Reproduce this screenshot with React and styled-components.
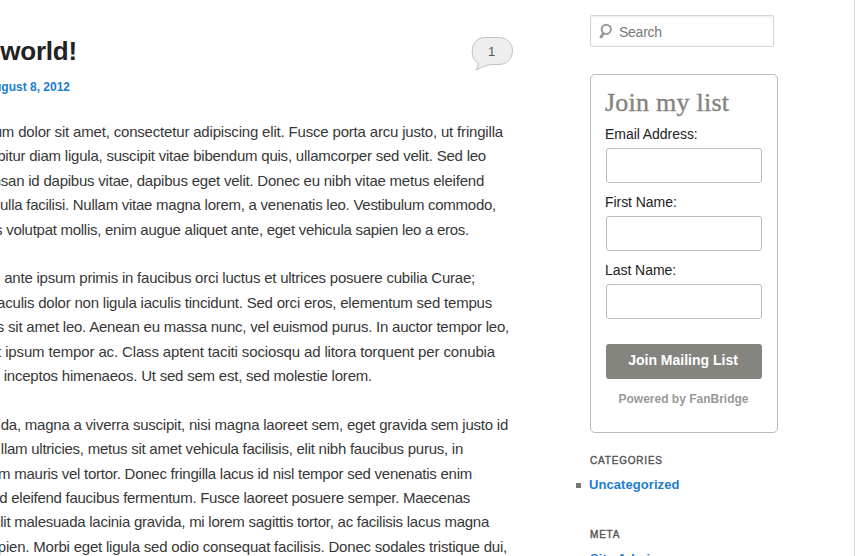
import React from 'react';
import styled, { createGlobalStyle } from 'styled-components';

const GlobalStyle = createGlobalStyle`
  * { box-sizing: border-box; }
  body {
    margin: 0;
    overflow: hidden;
    background: #fff;
    color: #373737;
    font-family: "Liberation Sans", Arial, sans-serif;
  }
  h1, h2, h3, p, ul { margin: 0; padding: 0; font-weight: normal; }
`;

const Page = styled.div`
  display: grid;
  grid-template-columns: 520px 188px;
  column-gap: 70px;
  width: 855px;
  height: 556px;
  overflow: hidden;
  border-right: 1px solid #ddd;
`;

const Article = styled.article`
  overflow: hidden;
  padding-top: 33px;
`;

const EntryHeader = styled.header`
  display: flex;
  justify-content: space-between;
  align-items: flex-start;
  height: 44px;
  padding-right: 6px;
`;

const EntryTitle = styled.h1`
  display: flex;
  justify-content: flex-end;
  width: 77px;
  font-size: 26px;
  font-weight: bold;
  line-height: 36px;
  letter-spacing: -0.2px;
  white-space: nowrap;
  color: #222;
`;

const CommentLink = styled.a`
  display: grid;
  width: 43px;
  height: 36px;
  margin-top: 3px;
  > * { grid-area: 1 / 1; }
`;

const CommentCount = styled.span`
  padding-right: 2px;
  font-size: 13px;
  line-height: 32px;
  text-align: center;
  color: #555;
`;

const EntryDate = styled.a`
  display: flex;
  justify-content: flex-end;
  width: 70px;
  height: 43.1px;
  font-size: 12px;
  font-weight: bold;
  line-height: 20px;
  white-space: nowrap;
  color: #1b7dd0;
`;

const Paragraph = styled.p`
  margin-bottom: 24.4px;
`;

const Line = styled.span`
  display: flex;
  justify-content: flex-end;
  width: ${({ $width }) => $width}px;
  height: 24.4px;
  font-size: 15px;
  line-height: 24.4px;
  letter-spacing: ${({ $tracking }) => $tracking}px;
  white-space: nowrap;
`;

const Sidebar = styled.aside`
  padding-top: 15px;
`;

const SearchForm = styled.form`
  display: flex;
  align-items: center;
  width: 184px;
  height: 32px;
  margin-bottom: 27px;
  padding-left: 8px;
  gap: 6px;
  border: 1px solid #d6d6d6;
  border-radius: 2px;
  box-shadow: inset 0 1px 2px rgba(0, 0, 0, 0.08);
`;

const SearchInput = styled.input`
  width: 140px;
  padding: 2px 0 0;
  border: 0;
  outline: 0;
  background: transparent;
  font: 14px "Liberation Sans", Arial, sans-serif;
  letter-spacing: -0.25px;
  &::placeholder { color: #777; opacity: 1; }
`;

const Signup = styled.form`
  display: flex;
  flex-direction: column;
  height: 359px;
  padding: 13px 15px 0 14px;
  border: 1px solid #bbb;
  border-radius: 5px;
`;

const SignupTitle = styled.h2`
  height: 34px;
  font: 26px/30px "Liberation Serif", Georgia, serif;
  letter-spacing: 0.24px;
  white-space: nowrap;
  color: #858580;
  -webkit-text-stroke: 0.4px #858580;
`;

const Field = styled.label`
  display: flex;
  flex-direction: column;
  gap: 2px;
  height: 68px;
  font-size: 14px;
  line-height: 24px;
  letter-spacing: -0.05px;
  color: #222;
`;

const FieldInput = styled.input`
  width: 156px;
  height: 35px;
  margin-left: 1px;
  border: 1px solid #bbb;
  border-radius: 3px;
  outline: 0;
`;

const SubmitButton = styled.button`
  width: 156px;
  height: 35px;
  margin: 18px 0 0 1px;
  padding: 0 2px 3px 0;
  border: 0;
  border-radius: 3px;
  background: #858580;
  font: bold 14px "Liberation Sans", Arial, sans-serif;
  color: #fff;
`;

const PoweredBy = styled.p`
  margin-top: 10px;
  font-size: 12px;
  font-weight: bold;
  line-height: 20px;
  text-align: center;
  white-space: nowrap;
  color: #999;
`;

const WidgetTitle = styled.h3`
  font-size: 10px;
  line-height: 26px;
  font-weight: 500;
  letter-spacing: 0.8px;
  color: #555;
  -webkit-text-stroke: 0.4px #555;
`;

const Widget = styled.section`
  height: 74px;
  &:first-of-type { margin-top: 15px; }
`;

const LinkList = styled.ul`
  list-style: none;
`;

const LinkItem = styled.li`
  display: flex;
  align-items: center;
  gap: 8px;
  height: 22px;
  margin-left: ${({ $bulleted }) => ($bulleted ? '-14px' : '0')};
  &::before {
    content: "";
    display: ${({ $bulleted }) => ($bulleted ? 'block' : 'none')};
    width: 5px;
    height: 5px;
    margin-top: 1px;
    background: #777;
  }
`;

const SidebarLink = styled.a`
  font-size: 13px;
  font-weight: bold;
  letter-spacing: 0.07px;
  line-height: 22px;
  color: #1b7dd0;
`;

const paragraphs = [
  [
    ['um dolor sit amet, consectetur adipiscing elit. Fusce porta arcu justo, ut fringilla', 503, -0.18],
    ['bitur diam ligula, suscipit vitae bibendum quis, ullamcorper sed velit. Sed leo', 486, -0.219],
    ['nsan id dapibus vitae, dapibus eget velit. Donec eu nibh vitae metus eleifend', 484, -0.225],
    ['ulla facilisi. Nullam vitae magna lorem, a venenatis leo. Vestibulum commodo,', 496, -0.261],
    ['s volutpat mollis, enim augue aliquet ante, eget vehicula sapien leo a eros.', 469, -0.271],
  ],
  [
    ['ante ipsum primis in faucibus orci luctus et ultrices posuere cubilia Curae;', 475, -0.223],
    ['aculis dolor non ligula iaculis tincidunt. Sed orci eros, elementum sed tempus', 492, -0.208],
    ['s sit amet leo. Aenean eu massa nunc, vel euismod purus. In auctor tempor leo,', 509, -0.222],
    ['t ipsum tempor ac. Class aptent taciti sociosqu ad litora torquent per conubia', 495, -0.137],
    ['inceptos himenaeos. Ut sed sem est, sed molestie lorem.', 372, -0.216],
  ],
  [
    ['da, magna a viverra suscipit, nisi magna laoreet sem, eget gravida sem justo id', 508, -0.228],
    ['llam ultricies, metus sit amet vehicula facilisis, elit nibh faucibus purus, in', 463, -0.249],
    ['m mauris vel tortor. Donec fringilla lacus id nisl tempor sed venenatis enim', 472, -0.247],
    ['d eleifend faucibus fermentum. Fusce laoreet posuere semper. Maecenas', 470, -0.272],
    ['lit malesuada lacinia gravida, mi lorem sagittis tortor, ac facilisis lacus magna', 489, -0.255],
    ['pien. Morbi eget ligula sed odio consequat facilisis. Donec sodales tristique dui,', 507, -0.206],
  ],
];

const fields = ['Email Address:', 'First Name:', 'Last Name:'];

function CommentBubble() {
  return (
    <svg width="43" height="36" viewBox="0 0 43 36" fill="none">
      <path
        d="M15 1.5H27C36 1.5 41.5 7 41.5 14.5C41.5 23 36 28.5 27 28.5H22C16 28.5 11 31 5 34C6.3 31.5 7.5 29.5 7.2 27.2C3.2 25 1.2 20.5 1.2 15.5C1.2 7 6.5 1.5 15 1.5Z"
        fill="#eee"
        stroke="#c2c2c2"
      />
    </svg>
  );
}

function SearchIcon() {
  return (
    <svg width="14" height="17" viewBox="0 0 14 17" fill="none" stroke="#999">
      <circle cx="7.3" cy="6.3" r="4.6" strokeWidth="2" />
      <path d="M4.5 10L1.5 15" strokeWidth="3" />
    </svg>
  );
}

export default function App() {
  return (
    <>
      <GlobalStyle />
      <Page>
        <Article>
          <EntryHeader>
            <EntryTitle>world!</EntryTitle>
            <CommentLink>
              <CommentBubble />
              <CommentCount>1</CommentCount>
            </CommentLink>
          </EntryHeader>
          <EntryDate>ugust 8, 2012</EntryDate>
          {paragraphs.map((lines, index) => (
            <Paragraph key={index}>
              {lines.map(([text, width, tracking]) => (
                <Line key={text} $width={width} $tracking={tracking}>{text}</Line>
              ))}
            </Paragraph>
          ))}
        </Article>
        <Sidebar>
          <SearchForm>
            <SearchIcon />
            <SearchInput placeholder="Search" />
          </SearchForm>
          <Signup>
            <SignupTitle>Join my list</SignupTitle>
            {fields.map((label) => (
              <Field key={label}>
                {label}
                <FieldInput />
              </Field>
            ))}
            <SubmitButton type="button">Join Mailing List</SubmitButton>
            <PoweredBy>Powered by FanBridge</PoweredBy>
          </Signup>
          <Widget>
            <WidgetTitle>CATEGORIES</WidgetTitle>
            <LinkList>
              <LinkItem $bulleted><SidebarLink>Uncategorized</SidebarLink></LinkItem>
            </LinkList>
          </Widget>
          <Widget>
            <WidgetTitle>META</WidgetTitle>
            <LinkList>
              <LinkItem><SidebarLink>Site Admin</SidebarLink></LinkItem>
            </LinkList>
          </Widget>
        </Sidebar>
      </Page>
    </>
  );
}
